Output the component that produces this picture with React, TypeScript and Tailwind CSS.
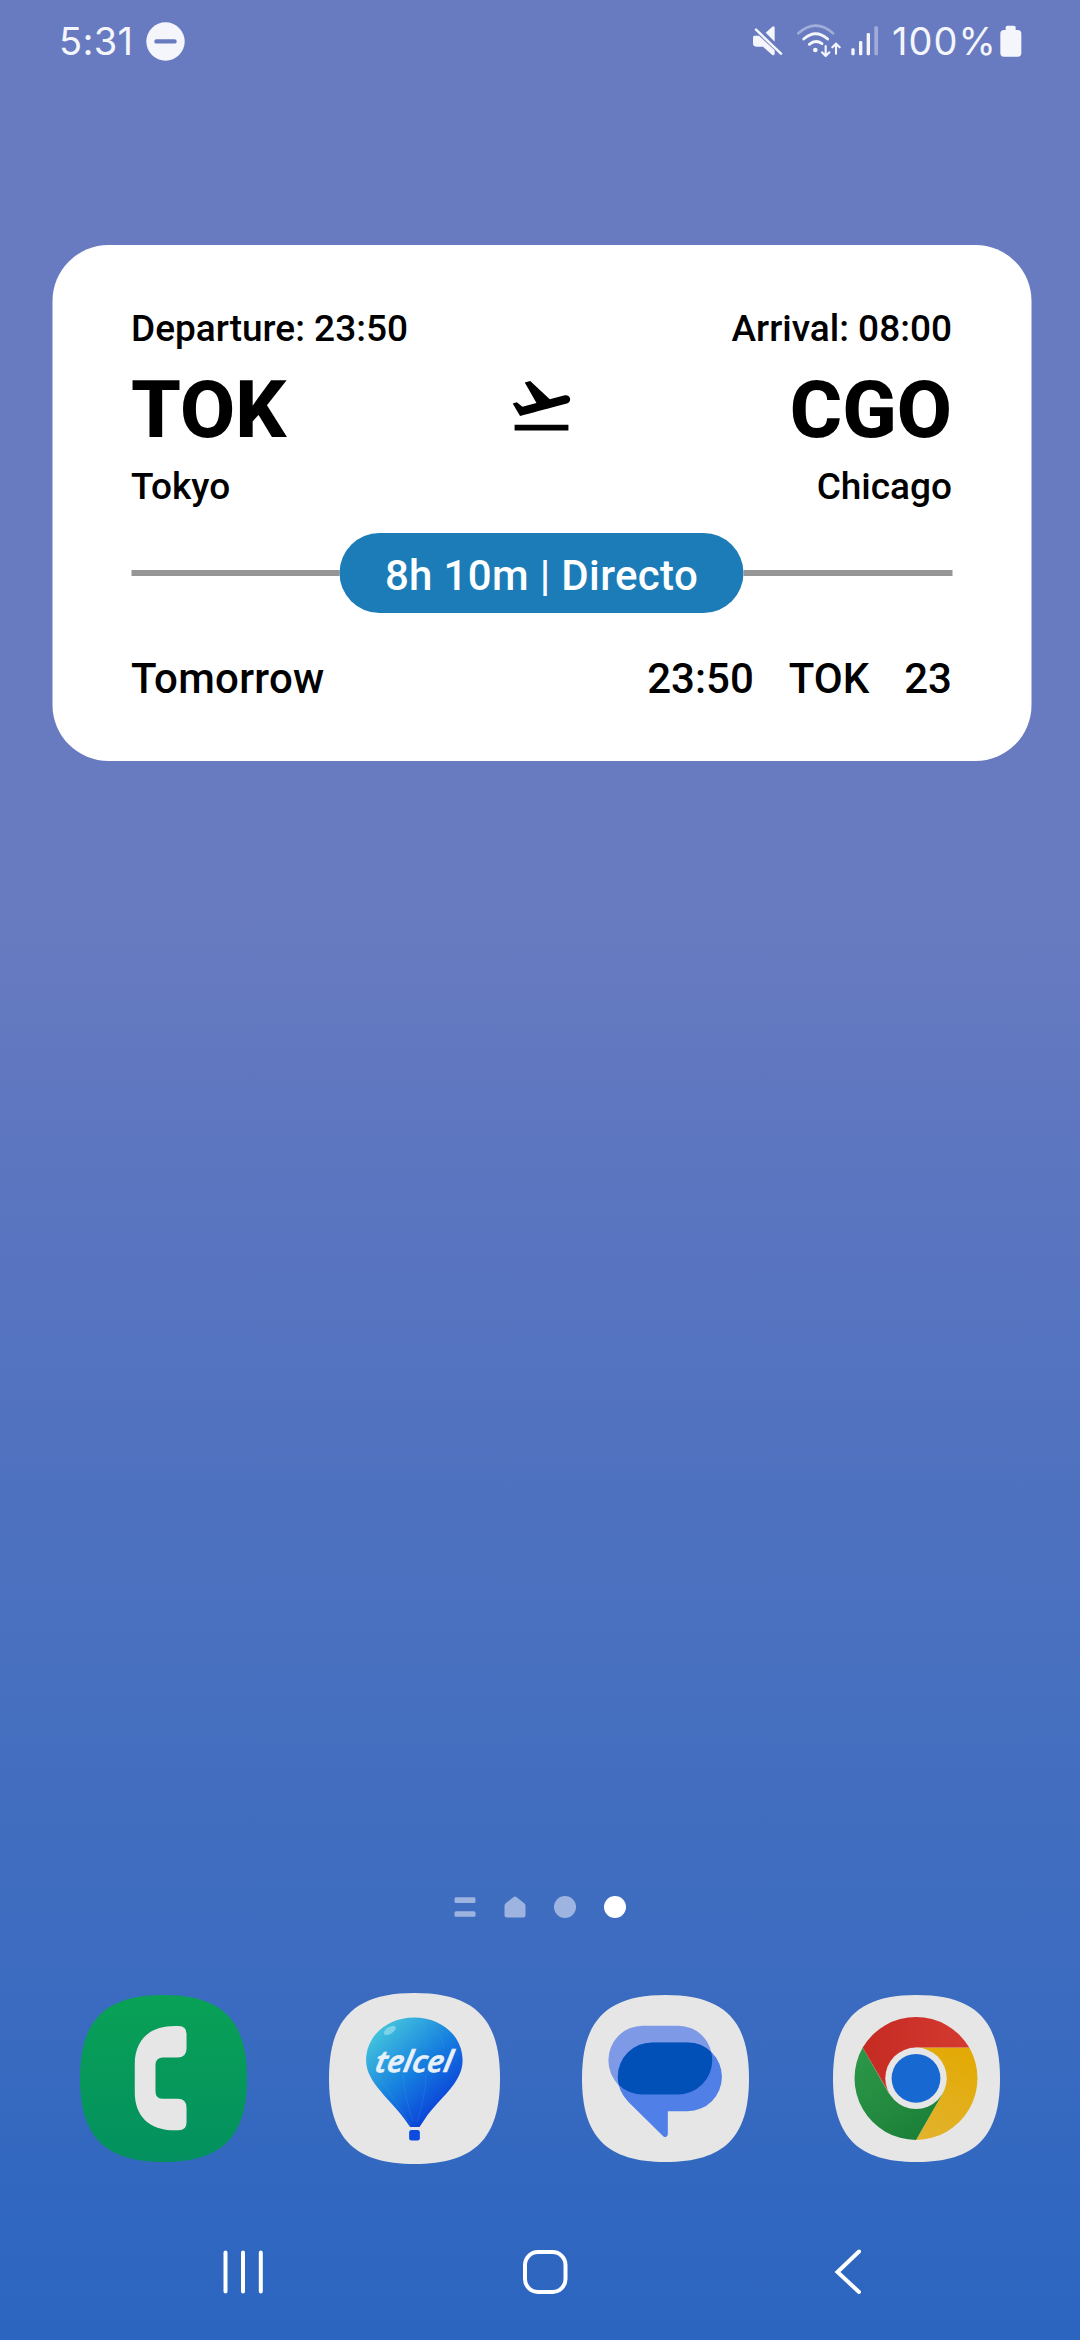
import type { ReactNode } from "react";
import { MdFlightTakeoff } from "react-icons/md";

const SQUIRCLE = "M0 250C0 75 75 0 250 0S500 75 500 250S425 500 250 500S0 425 0 250Z";

function StatusBar() {
  return (
    <header className="flex h-[82px] items-center justify-between pl-[59px] pr-[58px] text-[#f4f6fc]">
      <div className="flex items-center">
        <span className="w-[87px] whitespace-nowrap font-['Inter'] text-[38px] font-normal leading-[82px] tracking-[0.3px]">5:31</span>
        <svg className="h-[39px] w-[39px]" viewBox="0 0 39 39">
          <circle cx="19.5" cy="19.5" r="19.2" fill="#f4f6fc" />
          <rect x="8.3" y="17.2" width="22.4" height="4.4" rx="2.2" fill="#687bc0" />
        </svg>
      </div>
      <div className="flex items-center">
        <svg className="h-[34px] w-[34px]" viewBox="60 74 102 102" fill="#f4f6fc">
          <path d="M104 100L124 82Q131 78 131 86V127ZM70 109H84L131 153V164Q129 171 123 166L96 142H76Q66 142 66 132V116Q66 109 70 109Z" />
          <path d="M82 85L157 157" stroke="#687bc0" strokeWidth="6" />
          <path d="M75 91L150 163" stroke="#f4f6fc" strokeWidth="7.5" strokeLinecap="round" />
        </svg>
        <svg className="ml-[10px] h-[34px] w-[48px]" viewBox="192 74 144 102" fill="none" stroke="#f4f6fc" strokeLinecap="round" strokeLinejoin="round">
          <path d="M202 102Q254 56 306 102" strokeWidth="8" opacity=".42" />
          <path d="M218 119Q254 87 290 119" strokeWidth="8.5" />
          <path d="M235 135Q254 119 273 133" strokeWidth="8.5" />
          <circle cx="253" cy="152" r="7" fill="#f4f6fc" stroke="none" />
          <path d="M284 140V170M273 159L284 170L295 159" strokeWidth="6.5" />
          <path d="M315 163V133M304 144L315 133L326 144" strokeWidth="6.5" />
        </svg>
        <svg className="ml-[6px] h-[34px] w-[32px]" viewBox="354 74 96 102" fill="#f4f6fc">
          <rect x="361" y="147" width="10" height="21" rx="4" />
          <rect x="384" y="125" width="10" height="43" rx="4" />
          <rect x="407" y="101" width="10" height="67" rx="4" />
          <rect x="430" y="81" width="11" height="87" rx="4" opacity=".4" />
        </svg>
        <span className="ml-[11px] w-[108px] whitespace-nowrap font-['Inter'] text-[38px] font-normal leading-[82px] tracking-[1px]">100%</span>
        <svg className="h-[33px] w-[22px]" viewBox="809 75 66 99" fill="#f4f6fc">
          <path d="M826 82Q826 77 831 77H851Q856 77 856 82V90H862Q873 90 873 101V159Q873 170 862 170H821Q810 170 810 159V101Q810 90 821 90H826Z" />
        </svg>
      </div>
    </header>
  );
}

function Airport({ label, code, city, end }: { label: string; code: string; city: string; end?: boolean }) {
  return (
    <div className={end ? "flex w-[300px] flex-col items-end" : "flex w-[300px] flex-col items-start"}>
      <p className="whitespace-nowrap text-[37px] font-medium leading-[44px]">{label}</p>
      <p className="mt-[19px] text-[80px] font-extrabold leading-[80px]">{code}</p>
      <p className="mt-[15px] text-[37px] font-medium leading-[44px]">{city}</p>
    </div>
  );
}

function FlightCard() {
  return (
    <section className="mx-auto mt-[163px] flex h-[516px] w-[979px] translate-x-[1.5px] flex-col rounded-[56px] bg-white px-[79px] pt-[62px] font-['Roboto'] text-black">
      <div className="flex justify-between">
        <Airport label="Departure: 23:50" code="TOK" city="Tokyo" />
        <MdFlightTakeoff className="mt-[64px] h-[68px] w-[68px]" />
        <Airport label="Arrival: 08:00" code="CGO" city="Chicago" end />
      </div>
      <div className="mt-[24px] flex items-center">
        <div className="h-[6px] flex-1 bg-[#969696]" />
        <div className="flex h-[80px] w-[404px] items-center justify-center rounded-full bg-[#1b7cb8] pt-[4px] text-[42px] font-medium tracking-[0.35px] text-white">
          8h 10m | Directo
        </div>
        <div className="h-[6px] flex-1 bg-[#969696]" />
      </div>
      <div className="mt-[41px] flex text-[42px] font-medium leading-[50px]">
        <span className="flex-1 tracking-[0.3px]">Tomorrow</span>
        <span>23:50</span>
        <span className="ml-[35px]">TOK</span>
        <span className="ml-[35px]">23</span>
      </div>
    </section>
  );
}

function PageIndicator() {
  return (
    <div className="flex h-[22px] justify-center gap-[28px]">
      <svg className="h-[22px] w-[22px]" viewBox="0 0 22 22" fill="#9db4e0">
        <rect x=".5" y="1.3" width="21" height="5.6" rx="1.5" />
        <rect x=".5" y="15.2" width="21" height="5.6" rx="1.5" />
      </svg>
      <svg className="h-[22px] w-[22px]" viewBox="0 0 22 22" fill="#9db4e0">
        <path d="M9.3 1.2Q11 0 12.7 1.2L20.5 7.5Q21.5 8.3 21.5 9.5V19Q21.5 21.5 19 21.5H3Q.5 21.5.5 19V9.500Q.5 8.300 1.500 7.500Z" />
      </svg>
      <div className="h-[22px] w-[22px] rounded-full bg-[#9db4e0]" />
      <div className="h-[22px] w-[22px] rounded-full bg-white" />
    </div>
  );
}

function AppIcon({ label, fill, large, children }: { label: string; fill: string; large?: boolean; children: ReactNode }) {
  return (
    <button aria-label={label} className="flex h-[172px] items-center justify-center">
      <svg className="h-[167px] w-[167px] overflow-visible" viewBox="0 0 500 500">
        <path d={SQUIRCLE} fill={fill} transform={large ? "translate(-6 -6) scale(1.024)" : undefined} />
        {children}
      </svg>
    </button>
  );
}

function Dock() {
  return (
    <nav className="grid grid-cols-4 px-[38px]">
      <AppIcon label="Phone" fill="url(#phone)">
        <defs>
          <linearGradient id="phone" x1="0" y1="0" x2="0" y2="1">
            <stop offset="0" stopColor="#09a156" />
            <stop offset="1" stopColor="#03905f" />
          </linearGradient>
        </defs>
        <path d="M283 93H295Q319 93 319 117V160Q319 187 292 187H249Q226 187 226 210V288Q226 311 249 311H292Q319 311 319 338V381Q319 405 295 405H283C207 405 164 362 164 291V207C164 136 207 93 283 93Z" fill="#e6e6e6" />
      </AppIcon>
      <AppIcon label="telcel" fill="#e6e6e6" large>
        <defs>
          <linearGradient id="balloon" x1=".12" y1=".12" x2=".72" y2=".85">
            <stop offset="0" stopColor="#43c3dd" />
            <stop offset=".55" stopColor="#1680df" />
            <stop offset="1" stopColor="#0b45d9" />
          </linearGradient>
        </defs>
        <path d="M237 395L220 371C180 314 105 262 105 196C105 124 166 67 249 67S394 124 394 196C394 265 320 312 281 371L265 395Z" fill="url(#balloon)" />
        <ellipse cx="176" cy="106" rx="20" ry="10" transform="rotate(-32 176 106)" fill="#a6e2ef" opacity=".6" />
        <g fill="none" stroke="#4ba4ee" strokeWidth="2.500" opacity=".25">
          <path d="M216 240Q221 310 246 380" />
          <path d="M284 240Q282 310 258 380" />
          <path d="M145 245Q190 320 240 390" />
          <path d="M216 160Q212 110 235 72M284 160Q288 110 270 72M340 160Q328 110 290 75" />
        </g>
        <text transform="translate(129 230) skewX(-10)" fontFamily="Open Sans" fontStyle="italic" fontWeight="600" fontSize="90" textLength="230" lengthAdjust="spacingAndGlyphs" fill="#e8f0f8" stroke="#e8f0f8" strokeWidth="2">telcel</text>
        <rect x="234" y="404" width="32" height="32" rx="7" fill="#0c4bdd" />
      </AppIcon>
      <AppIcon label="Messages" fill="#e6e6e6">
        <path d="M182 92H288A102 102 0 0 1 390 195A103 103 0 0 1 288 298H182L112 273Q79 238 79 195A103 103 0 0 1 182 92Z" fill="#7e99e6" />
        <path d="M210 142H316A103 103 0 0 1 316 348H257V417Q255 430 244 424L139 320Q107 288 107 245A103 103 0 0 1 210 142Z" fill="#5080e7" />
        <path d="M210 142H316Q358 142 386 170Q390 182 390 195A103 103 0 0 1 288 298H182Q141 298 111 270Q107 258 107 245A103 103 0 0 1 210 142Z" fill="#0050b8" />
      </AppIcon>
      <AppIcon label="Chrome" fill="#e6e6e6">
        <defs>
          <linearGradient id="red" x1="0" x2="1">
            <stop offset="0" stopColor="#c52b22" />
            <stop offset="1" stopColor="#d43a30" />
          </linearGradient>
          <linearGradient id="yellow" x1=".6" y1="0" x2=".3" y2="1">
            <stop offset="0" stopColor="#e3aa05" />
            <stop offset="1" stopColor="#e2b22b" />
          </linearGradient>
          <linearGradient id="green" x1="0" y1="0" x2=".7" y2="1">
            <stop offset="0" stopColor="#2d9949" />
            <stop offset="1" stopColor="#1c8038" />
          </linearGradient>
        </defs>
        <path d="M248.500 157.500H408A184.500 184.500 0 0 1 248.500 434L328 296Z" fill="url(#yellow)" />
        <path d="M89 157.500A184.500 184.500 0 0 0 248.500 434L328 296L168 296Z" fill="url(#green)" />
        <path d="M89 157.500A184.500 184.500 0 0 1 408 157.500H248.500L169 296Z" fill="url(#red)" />
        <circle cx="248.500" cy="249.500" r="92" fill="#e6e6e6" />
        <circle cx="248.500" cy="249.500" r="73" fill="#1868d1" />
      </AppIcon>
    </nav>
  );
}

function NavigationBar() {
  return (
    <footer className="flex h-[46px] items-center justify-between pl-[222px] pr-[217px]">
      <svg className="h-[46px] w-[42px]" viewBox="0 0 42 46" stroke="white" strokeWidth="4" strokeLinecap="round">
        <path d="M3.500 3.500V42.500M21 3.500V42.500M38.800 3.500V42.500" />
      </svg>
      <svg className="mr-[7px] h-[46px] w-[46px]" viewBox="0 0 46 46" fill="none" stroke="white" strokeWidth="4">
        <rect x="3" y="3" width="40.500" height="40" rx="13" />
      </svg>
      <svg className="h-[46px] w-[30px]" viewBox="0 0 30 46" fill="none" stroke="white" strokeWidth="4" strokeLinecap="round">
        <path d="M26 2.500L4.500 23L26 43" />
      </svg>
    </footer>
  );
}

export default function App() {
  return (
    <main className="flex h-[2340px] w-[1080px] flex-col overflow-hidden bg-[linear-gradient(180deg,#687bc0_0px,#687bc0_900px,#5874c0_1260px,#4870bf_1650px,#3d6cc0_1950px,#2b65c0_2340px)]">
      <StatusBar />
      <FlightCard />
      <div className="flex-1" />
      <PageIndicator />
      <div className="mt-[74px]">
        <Dock />
      </div>
      <div className="mt-[85px] mb-[45px]">
        <NavigationBar />
      </div>
    </main>
  );
}
